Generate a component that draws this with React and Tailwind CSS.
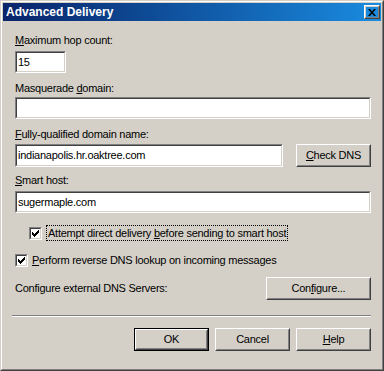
function Sunken({ className = "", children }) {
  return (
    <div className={`border border-t-[#808080] border-l-[#808080] border-r-white border-b-white ${className}`}>
      <div className="h-full w-full border border-t-[#404040] border-l-[#404040] border-r-[#d4d0c8] border-b-[#d4d0c8] bg-white flex items-center pl-[1px] text-black whitespace-nowrap">
        {children}
      </div>
    </div>
  );
}

function Button({ className = "", children, isDefault }) {
  const inner = (
    <div className="h-full w-full border border-t-white border-l-white border-r-[#404040] border-b-[#404040]">
      <div className="h-full w-full border border-t-[#d4d0c8] border-l-[#d4d0c8] border-r-[#808080] border-b-[#808080] flex items-center justify-center whitespace-nowrap">
        <span>{children}</span>
      </div>
    </div>
  );
  if (isDefault) {
    return <div className={`border border-black ${className}`}>{inner}</div>;
  }
  return <div className={className}>{inner}</div>;
}

function Check() {
  return (
    <div className="w-[13px] h-[13px] shrink-0 border border-t-[#808080] border-l-[#808080] border-r-white border-b-white">
      <div className="h-full w-full border border-t-[#404040] border-l-[#404040] border-r-[#d4d0c8] border-b-[#d4d0c8] bg-white flex items-center justify-center">
        <svg width="7" height="7" viewBox="0 0 7 7">
          <path d="M0 2h1v1h1v1h1V3h1V2h1V1h1V0h1v3H6v1H5v1H4v1H3v1H2V6H1V5H0z" fill="#000" />
        </svg>
      </div>
    </div>
  );
}

const U = ({ children }) => <span className="underline underline-offset-[1px]">{children}</span>;

export default function App() {
  return (
    <div className="w-[384px] h-[371px] bg-[#d4d0c8] font-['Liberation_Sans',Arial,sans-serif] text-[11px] leading-[13px] tracking-[-0.25px] text-black">
      <div className="h-full border border-t-[#d4d0c8] border-l-[#d4d0c8] border-r-[#404040] border-b-[#404040]">
        <div className="h-full border border-t-white border-l-white border-r-[#808080] border-b-[#808080] p-[1px]">
          <div className="h-[18px] bg-gradient-to-r from-[#0a246a] to-[#1a8ce0] flex items-center justify-between pl-[3px] pr-[1px]">
            <span className="text-white font-bold text-[12px] tracking-normal">Advanced Delivery</span>
            <Button className="w-[16px] h-[14px]">
              <svg width="8" height="7" viewBox="0 0 8 7" className="block">
                <path d="M0 0h2l2 2.5L6 0h2L5 3.5 8 7H6L4 4.5 2 7H0l3-3.5z" fill="#000" />
              </svg>
            </Button>
          </div>

          <div className="pl-[12px] flex flex-col">
            <div className="mt-[13px]"><U>M</U>aximum hop count:</div>
            <Sunken className="mt-[4px] w-[51px] h-[22px]">15</Sunken>

            <div className="mt-[9px]">Masquerade <U>d</U>omain:</div>
            <Sunken className="mt-[2px] w-[356px] h-[22px]" />

            <div className="mt-[9px]"><U>F</U>ully-qualified domain name:</div>
            <div className="mt-[3px] flex items-start w-[356px] justify-between">
              <Sunken className="w-[268px] h-[23px]">indianapolis.hr.oaktree.com</Sunken>
              <Button className="w-[75px] h-[23px]"><U>C</U>heck DNS</Button>
            </div>

            <div className="mt-[7px]"><U>S</U>mart host:</div>
            <Sunken className="mt-[4px] w-[356px] h-[22px]">sugermaple.com</Sunken>

            <div className="mt-[12px] h-[16px] flex items-center pl-[14px]">
              <Check />
              <div className="ml-[4px] border border-dotted border-black h-[16px] leading-[14px] pl-[1px] whitespace-nowrap w-[242px]">
                Attempt direct delivery <U>b</U>efore sending to smart host
              </div>
            </div>

            <div className="mt-[11px] h-[16px] flex items-center">
              <Check />
              <div className="ml-[4px] whitespace-nowrap"><U>P</U>erform reverse DNS lookup on incoming messages</div>
            </div>

            <div className="mt-[9px] w-[356px] flex items-center justify-between">
              <span>Configure external DNS Servers:</span>
              <Button className="w-[105px] h-[23px]">Con<U>f</U>igure...</Button>
            </div>

            <div className="mt-[15px] -ml-[3px] w-[359px] border-t border-t-[#808080] border-b border-b-white" />

            <div className="mt-[11px] w-[356px] flex justify-end gap-[6px]">
              <Button isDefault className="w-[75px] h-[23px]">OK</Button>
              <Button className="w-[75px] h-[23px]">Cancel</Button>
              <Button className="w-[75px] h-[23px]"><U>H</U>elp</Button>
            </div>
          </div>
        </div>
      </div>
    </div>
  );
}
